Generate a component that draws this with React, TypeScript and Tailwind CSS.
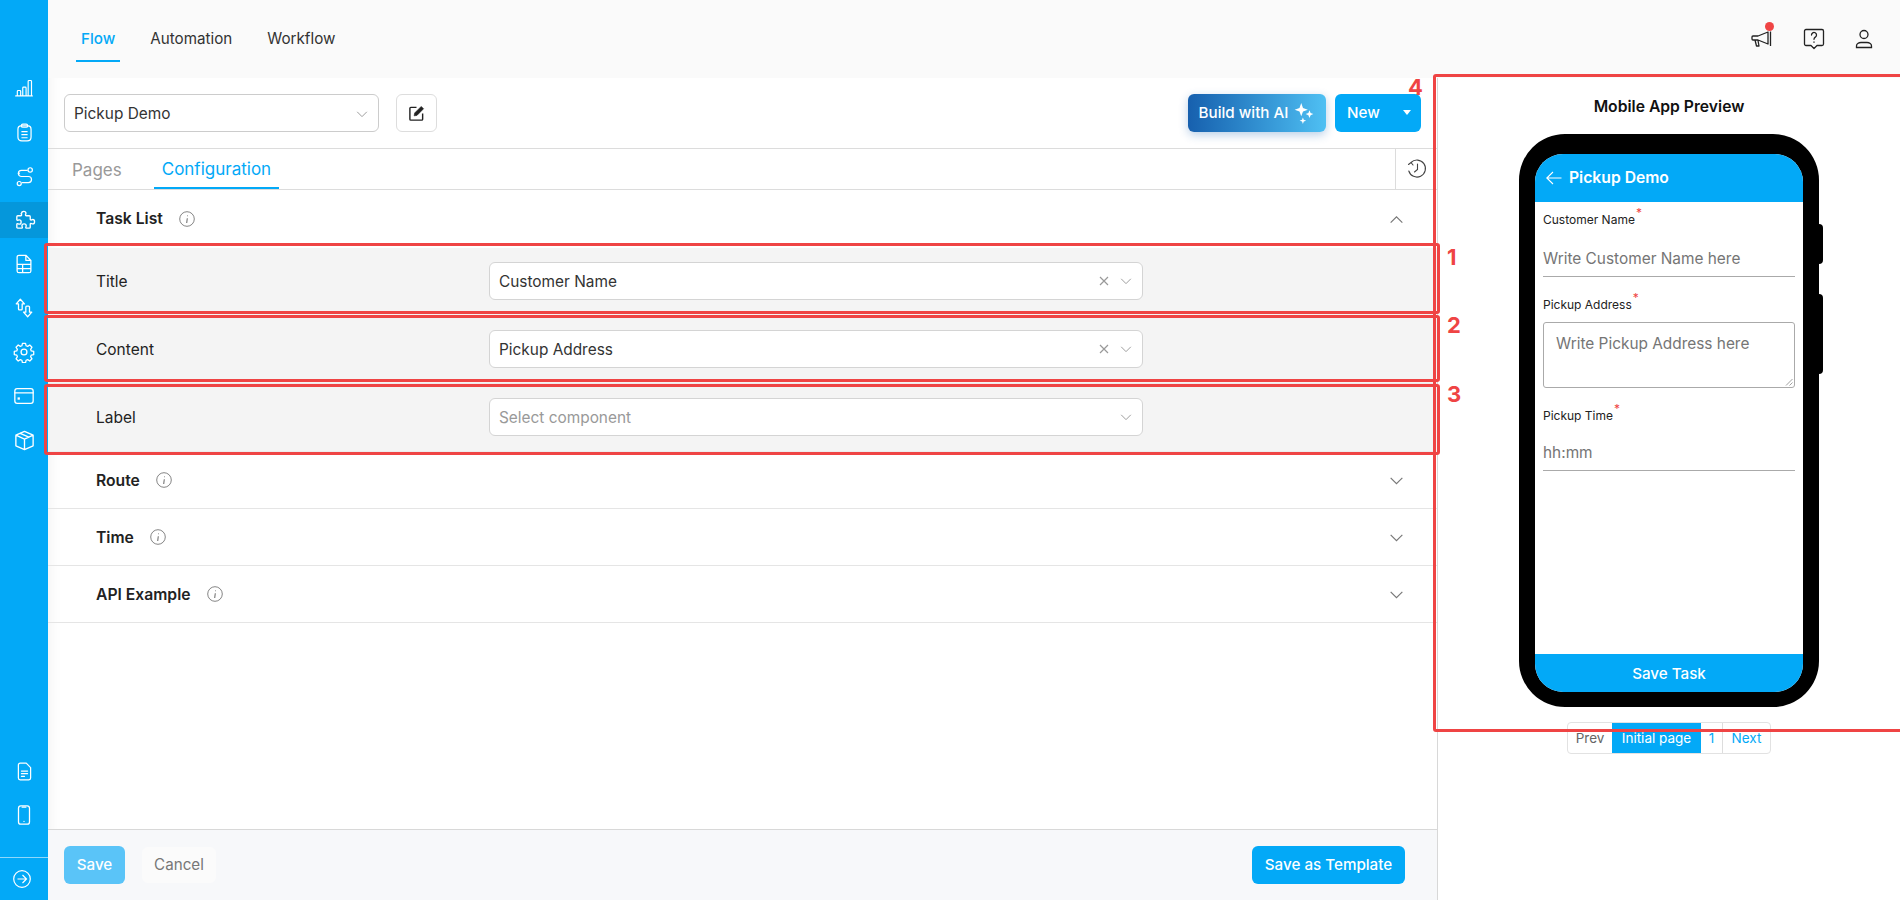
import type { ReactNode } from 'react';

const ICON = 'fill-none stroke-current';

function Svg({ size = 20, width = 1.4, children }: { size?: number; width?: number; children: ReactNode }) {
  return (
    <svg width={size} height={size} viewBox="0 0 24 24" className={ICON} strokeWidth={width} strokeLinecap="round" strokeLinejoin="round">
      {children}
    </svg>
  );
}

const sideTop: ReactNode[] = [
  <Svg key="bars" size={20}>
    <path d="M2 21.5h20M4 21v-5a1 1 0 0 1 1-1h2a1 1 0 0 1 1 1v5M10.5 21v-9a1 1 0 0 1 1-1h2a1 1 0 0 1 1 1v9M17 21V4a1 1 0 0 1 1-1h2a1 1 0 0 1 1 1v17" />
  </Svg>,
  <Svg key="clip" size={21}>
    <path d="M8 4.500h8c2.500 0 3.500 1.500 3.500 4v8.500c0 2.800-1.700 4.500-4.500 4.500H9c-2.800 0-4.500-1.700-4.500-4.500V8.500c0-2.500 1-4 3.500-4z" />
    <rect x="8.500" y="2.500" width="7" height="3.500" rx="1.500" />
    <path d="M9 11h6M9 14.500h6M9 18h6" />
  </Svg>,
  <Svg key="route" size={21}>
    <circle cx="6" cy="20" r="2.300" />
    <circle cx="18.500" cy="4.500" r="2.500" />
    <path d="M15 5H8.500a3.500 3.500 0 0 0 0 7h8a3.500 3.500 0 0 1 0 7H9.500" />
    <circle cx="5.500" cy="8.500" r="0.500" />
  </Svg>,
  <Svg key="puzzle" size={23}>
    <path d="M9 4.500c0-1.300 1-2 2.200-2s2.300.7 2.300 2c0 .8-.5 1.200-.5 1.800 0 .4.300.7.700.7H17a1 1 0 0 1 1 1v2.800c0 .4.300.7.700.7.600 0 1-.5 1.800-.5 1.300 0 2 1 2 2.200s-.7 2.300-2 2.300c-.8 0-1.200-.5-1.800-.5-.4 0-.7.300-.7.700V19a1 1 0 0 1-1 1h-3c-.4 0-.7-.3-.7-.7 0-.6.500-1 .5-1.800 0-1.200-1-2-2.200-2s-2.300.8-2.300 2c0 .8.500 1.200.5 1.800 0 .4-.3.700-.7.700H5a1 1 0 0 1-1-1v-3c0-.4.300-.7.700-.7.600 0 1 .5 1.800.5 1.200 0 2-1 2-2.300s-.8-2.200-2-2.200c-.8 0-1.200.5-1.800.5-.4 0-.7-.3-.7-.7V8a1 1 0 0 1 1-1h3.300c.4 0 .7-.3.700-.7 0-.6-.5-1-.5-1.800z" />
  </Svg>,
  <Svg key="sheet" size={22}>
    <path d="M14 2.500H6.500a2 2 0 0 0-2 2v15a2 2 0 0 0 2 2h11a2 2 0 0 0 2-2V8zM14 2.500V8h5.500M4.500 12.500h15M4.500 17h15M10.500 12.500v9" />
  </Svg>,
  <Svg key="updown" size={22}>
    <path d="M8 2.500 3.500 7.500H6v5.500a1 1 0 0 0 1 1h2a1 1 0 0 0 1-1V7.500h2.500zM16 21.500l4.500-5H18V11a1 1 0 0 0-1-1h-2a1 1 0 0 0-1 1v5.500h-2.500z" />
  </Svg>,
  <Svg key="gear" size={22}>
    <circle cx="12" cy="12" r="3.200" />
    <path d="M10.300 2.500h3.400l.6 2.700 1.700.7 2.300-1.500 2.400 2.400-1.500 2.300.7 1.700 2.700.6v3.400l-2.700.6-.7 1.700 1.500 2.300-2.400 2.400-2.300-1.500-1.700.7-.6 2.700h-3.400l-.6-2.700-1.700-.7-2.300 1.500-2.400-2.400 1.500-2.300-.7-1.700-2.700-.6v-3.400l2.700-.6.7-1.700-1.500-2.300 2.400-2.400 2.300 1.500 1.700-.7z" />
  </Svg>,
  <Svg key="card" size={22}>
    <rect x="2" y="4" width="20" height="16" rx="2.500" />
    <path d="M2 8.500h20" />
    <rect x="5" y="13.500" width="2.500" height="2.500" fill="currentColor" stroke="none" />
  </Svg>,
  <Svg key="box" size={23}>
    <path d="M12 2.500l9 4v11l-9 4-9-4v-11zM3 6.500l9 4 9-4M12 10.500v11M7.500 4.500l9 4" />
  </Svg>,
];

function Info() {
  return (
    <span className="text-[#777]">
      <svg width="16" height="16" viewBox="0 0 16 16" className={ICON} strokeWidth={0.9}>
        <circle cx="8" cy="8" r="7.300" />
        <path d="M8.300 7.200 7.700 12" strokeWidth={1.100} />
        <circle cx="8.500" cy="4.800" r="0.500" fill="currentColor" stroke="none" />
      </svg>
    </span>
  );
}

function Chevron({ up = false, size = 16, className = 'text-[#777]' }: { up?: boolean; size?: number; className?: string }) {
  return (
    <span className={className}>
      <svg width={size} height={size} viewBox="0 0 16 16" className={ICON} strokeWidth={1.100}>
        <path d={up ? 'M2.500 11 8 5.500 13.500 11' : 'M2.500 5.500 8 11l5.500-5.500'} />
      </svg>
    </span>
  );
}

function Field({ label, value }: { label: string; value?: string }) {
  return (
    <div className="flex h-[68px] items-center border-b border-[#ececec] bg-[#f4f4f4] pl-[48px]">
      <div className="w-[393px] text-[15.500px] text-[#222]">{label}</div>
      <div className="mb-[2px] flex h-[38px] w-[654px] items-center rounded-md border border-[#d4d4d4] bg-white pl-[9px] pr-[9px]">
        <span className={`flex-1 pt-[2px] text-[15.400px] ${value ? 'text-[#333]' : 'text-[#999]'}`}>
          {value ?? 'Select component'}
        </span>
        {value && (
          <svg width="12" height="12" viewBox="0 0 12 12" className="mr-[9px] fill-none stroke-[#999]" strokeWidth={1.200}>
            <path d="M2 2l8 8M10 2l-8 8" />
          </svg>
        )}
        <Chevron size={14} className="text-[#999]" />
      </div>
    </div>
  );
}

function Section({ title, open = false, gap = 'ml-[16px]' }: { title: string; open?: boolean; gap?: string }) {
  return (
    <div className={`flex items-center justify-between pl-[48px] pr-[32px] ${open ? 'h-[58px]' : 'h-[57px] border-b border-[#e5e5e5]'}`}>
      <div className="flex items-center">
        <span className={`text-[15.700px] font-semibold text-[#222] ${open ? '' : 'pt-[2px]'}`}>{title}</span>
        <span className={gap}>
          <Info />
        </span>
      </div>
      <Chevron up={open} size={17} />
    </div>
  );
}

function Label({ text, className = '' }: { text: string; className?: string }) {
  return (
    <div className={`relative h-[22px] text-[12px] leading-[22px] text-[#222] ${className}`}>
      {text}
      <span className="relative top-[-7px] ml-[1px] text-[12px] text-[#ef4444]">*</span>
    </div>
  );
}

function Phone() {
  return (
    <div className="relative h-[573px] w-[300px]">
      <div className="absolute right-[-4px] top-[90px] h-[40px] w-[8px] rounded-sm bg-black" />
      <div className="absolute right-[-4px] top-[160px] h-[80px] w-[8px] rounded-sm bg-black" />
      <div className="relative flex h-full flex-col rounded-[46px] border-x-[16px] border-b-[15px] border-t-[20px] border-black bg-black">
        <div className="flex h-full flex-col overflow-hidden rounded-[28px] bg-white">
          <div className="flex h-[48px] items-center bg-[#03a9f7] pl-[11px] text-white">
            <svg width="16" height="14" viewBox="0 0 16 14" className="fill-none stroke-current" strokeWidth={1.100}>
              <path d="M15.500 7H.8M7 1 .8 7 7 13" />
            </svg>
            <span className="ml-[7px] text-[15.700px] font-semibold">Pickup Demo</span>
          </div>
          <div className="flex flex-1 flex-col px-[8px] pt-[7px]">
            <Label text="Customer Name" />
            <div className="mt-[9px] flex h-[37px] items-center border-b border-[#aaa] pt-[2px] text-[15.400px] text-[#757575]">Write Customer Name here</div>
            <Label text="Pickup Address" className="mt-[17px]" />
            <div className="relative mt-[6px] h-[66px] rounded-[3px] border border-[#aaa] pl-[12px] pt-[9px] text-[15.400px] text-[#757575]">
              Write Pickup Address here
              <svg width="8" height="8" viewBox="0 0 8 8" className="absolute bottom-[1px] right-[1px] stroke-[#777]" strokeWidth={0.7}>
                <path d="M1 7.500 7.500 1M4.500 7.500 7.500 4.500" />
              </svg>
            </div>
            <Label text="Pickup Time" className="mt-[17px]" />
            <div className="mt-[7px] flex h-[37px] items-center border-b border-[#aaa] pt-[2px] text-[15.400px] text-[#757575]">hh:mm</div>
          </div>
          <div className="flex h-[38px] items-center justify-center bg-[#03a9f7] pt-[2px] text-[15.200px] font-medium text-white">Save Task</div>
        </div>
      </div>
    </div>
  );
}

function Callout({ n, className }: { n: string; className: string }) {
  return <div className={`absolute text-[22px] font-bold leading-none text-[#ef4444] ${className}`}>{n}</div>;
}

export default function App() {
  return (
    <div className="relative flex h-[900px] w-full overflow-hidden bg-white font-['Inter',sans-serif] text-[#222]">
      {/* sidebar */}
      <aside className="flex w-[48px] shrink-0 flex-col bg-[#03a9f7] text-white">
        <div className="mt-[70px] flex flex-col gap-2">
          {sideTop.map((icon, i) => (
            <div key={i} className={`flex h-9 items-center justify-center ${i === 3 ? 'bg-[#0597db]' : ''}`}>
              {icon}
            </div>
          ))}
        </div>
        <div className="mt-auto flex flex-col gap-2 pb-[24px]">
          <div className="flex h-9 items-center justify-center">
            <Svg size={21}>
              <path d="M14 2.500H7a2 2 0 0 0-2 2v15a2 2 0 0 0 2 2h10a2 2 0 0 0 2-2V7.500zM8.500 11.500h7M8.500 14.500h7M8.500 17.500h3.500" />
            </Svg>
          </div>
          <div className="flex h-9 items-center justify-center">
            <Svg size={22}>
              <rect x="6" y="2" width="12" height="20" rx="2.500" />
              <path d="M10 3.500h4M12 19h.01" />
            </Svg>
          </div>
        </div>
        <div className="flex h-[43px] items-center border-t border-[#8fd8fb] pl-[13px]">
          <svg width="18" height="18" viewBox="0 0 18 18" className="fill-none stroke-white" strokeWidth={1.200}>
            <circle cx="9" cy="9" r="8.300" />
            <path d="M4.500 9h9M9.500 5l4 4-4 4" />
          </svg>
        </div>
      </aside>

      <div className="flex min-w-0 flex-1 flex-col">
        {/* top nav */}
        <header className="flex h-[78px] shrink-0 items-center bg-[#fafafa] pl-[28px] pr-[26px]">
          <nav className="flex h-full gap-[25px] text-[15.200px]">
            <div className="flex h-[62px] items-end border-b-2 border-[#03a9f7] px-[5px] pb-[9px] font-medium text-[#03a9f7]">Flow</div>
            <div className="flex h-[62px] items-end px-[5px] pb-[11px] text-[#333]">Automation</div>
            <div className="flex h-[62px] items-end px-[5px] pb-[11px] text-[#333]">Workflow</div>
          </nav>
          <div className="ml-auto flex items-center gap-[29px] text-[#222]">
            <div className="relative">
              <svg width="24" height="22" viewBox="0 0 24 22" className="fill-none stroke-current" strokeWidth={1.300} strokeLinejoin="round">
                <path d="M3 8h5l10-4v12L8 12H3a1 1 0 0 1-1-1V9a1 1 0 0 1 1-1zM5 12l1.500 6h2.500l-1-5.500M20.500 3.500V18" />
              </svg>
              <span className="absolute right-[0px] top-[-6px] size-[9px] rounded-full bg-[#ef4444]" />
            </div>
            <svg width="22" height="24" viewBox="0 0 22 24" className="fill-none stroke-current" strokeWidth={1.300} strokeLinejoin="round">
              <path d="M3 2.500h16a1.500 1.500 0 0 1 1.500 1.500v13a1.500 1.500 0 0 1-1.500 1.500h-5l-3 3-3-3H3A1.500 1.500 0 0 1 1.500 17V4A1.500 1.500 0 0 1 3 2.500z" />
              <path d="M8.500 8a2.500 2.500 0 1 1 3.800 2.100c-.9.600-1.300 1.100-1.300 2.200M11 15v.3" strokeLinecap="round" />
            </svg>
            <svg width="20" height="22" viewBox="0 0 20 22" className="fill-none stroke-current" strokeWidth={1.300}>
              <circle cx="10" cy="6.500" r="4" />
              <path d="M2.500 19.500V18c0-2 2-3.500 4.500-3.500h6c2.500 0 4.500 1.500 4.500 3.500v1.500z" />
            </svg>
          </div>
        </header>

        <div className="flex min-h-0 flex-1">
          {/* editor */}
          <main className="flex w-[1390px] shrink-0 flex-col border-r border-[#d8d8d8] shadow-[inset_14px_0_14px_-12px_rgba(0,0,0,0.05)]">
            <div className="flex h-[71px] shrink-0 items-center border-b border-[#dcdcdc] pl-[16px] pr-[16px]">
              <div className="flex h-[38px] w-[315px] items-center justify-between rounded-md border border-[#ccc] bg-white pl-[9px] pr-[9px] pt-px text-[15.400px] text-[#333]">
                Pickup Demo
                <Chevron size={14} className="text-[#999]" />
              </div>
              <div className="ml-[17px] flex h-[38px] w-[41px] items-center justify-center rounded-md border border-[#ddd] text-[#222]">
                <svg width="17" height="17" viewBox="0 0 18 18" className="fill-none stroke-current" strokeWidth={1.500}>
                  <path d="M9 2.500H3a1 1 0 0 0-1 1V15a1 1 0 0 0 1 1h11.500a1 1 0 0 0 1-1V9" />
                  <path d="M7 8.500 14 1.500l2.500 2.500-7 7-3 .5z" fill="currentColor" strokeWidth={0.6} />
                </svg>
              </div>
              <div className="ml-auto flex h-[38px] w-[138px] items-center justify-center gap-[5px] rounded-md bg-gradient-to-r from-[#1760ae] to-[#4fc0f3] text-[15.200px] font-medium text-white shadow-[0_3px_10px_rgba(23,96,174,0.3)]">
                Build with AI
                <svg width="22" height="22" viewBox="0 0 20 20" className="fill-white">
                  <path d="M7.500 1l1.600 4.400L13.500 7 9.100 8.600 7.500 13 5.900 8.600 1.500 7l4.400-1.600zM15 7.500l1 2.500 2.500 1-2.500 1-1 2.500-1-2.500-2.500-1 2.500-1zM9 14l.8 2.200 2.200.8-2.200.8L9 20l-.8-2.200L6 17l2.200-.8z" />
                </svg>
              </div>
              <div className="ml-[9px] flex h-[38px] w-[86px] items-center justify-between rounded-md bg-[#03a9f7] pl-[12px] pr-[10.500px] text-[15.200px] font-medium text-white">
                New
                <span className="mb-[2px] h-0 w-0 border-x-[4.500px] border-t-[5px] border-x-transparent border-t-white" />
              </div>
            </div>

            <div className="flex h-[41px] shrink-0 items-stretch border-b border-[#dcdcdc] pl-[8px]">
              <div className="flex items-center px-[16px] pt-[3px] text-[17px] text-[#999]">Pages</div>
              <div className="ml-[16px] flex items-center border-b-2 border-[#03a9f7] px-[8px] pt-[3px] text-[17px] text-[#03a9f7]">Configuration</div>
              <div className="ml-auto flex w-[42px] items-center justify-center border-l border-[#dcdcdc] text-[#444]">
                <svg width="20" height="20" viewBox="0 0 20 20" className="fill-none stroke-current" strokeWidth={1.100} strokeLinecap="round">
                  <path d="M4 3.500A8.500 8.500 0 1 1 1.800 12M1.500 5.500 4 3.500l2 2.500M10.500 5v5.500l-3 2.500" />
                </svg>
              </div>
            </div>

            <Section title="Task List" open />
            <Field label="Title" value="Customer Name" />
            <Field label="Content" value="Pickup Address" />
            <Field label="Label" />
            <Section title="Route" />
            <Section title="Time" />
            <Section title="API Example" />

            <div className="mt-auto flex h-[71px] shrink-0 items-center border-t border-[#d8d8d8] bg-[#f7f8fa] pl-[16px] pr-[32px]">
              <div className="flex h-[38px] w-[61px] items-center justify-center rounded-md bg-[#5ac4f8] text-[15.200px] font-medium text-white">Save</div>
              <div className="ml-[17px] flex h-[36px] w-[74px] items-center justify-center rounded-md bg-[#fbfbfb] text-[15.200px] text-[#777]">Cancel</div>
              <div className="ml-auto flex h-[38px] w-[153px] items-center justify-center rounded-md bg-[#03a9f7] text-[15.200px] font-medium text-white">Save as Template</div>
            </div>
          </main>

          {/* preview */}
          <section className="flex min-w-0 flex-1 flex-col items-center pt-[19px]">
            <h2 className="text-[15.700px] font-semibold leading-[20px] text-[#111]">Mobile App Preview</h2>
            <div className="mt-[17px]">
              <Phone />
            </div>
            <div className="mt-[15px] flex h-[32px] w-[204px] items-stretch overflow-hidden rounded-[4px] border border-[#e2e2e2] text-[13.500px]">
              <div className="flex w-[44px] items-center justify-center text-[#666]">Prev</div>
              <div className="flex w-[89px] items-center justify-center bg-[#03a9f7] text-white">Initial page</div>
              <div className="flex w-[22px] items-center justify-center border-r border-[#ddd] text-[#03a9f7]">1</div>
              <div className="flex flex-1 items-center justify-center text-[#03a9f7]">Next</div>
            </div>
          </section>
        </div>
      </div>

      {/* annotation boxes drawn on top of the screenshot */}
      <div className="pointer-events-none absolute left-[44px] top-[243px] h-[71px] w-[1396px] rounded-[3px] border-[3px] border-[#ef4444]" />
      <div className="pointer-events-none absolute left-[44px] top-[315px] h-[67px] w-[1396px] rounded-[3px] border-[3px] border-[#ef4444]" />
      <div className="pointer-events-none absolute left-[44px] top-[384px] h-[71px] w-[1396px] rounded-[3px] border-[3px] border-[#ef4444]" />
      <div className="pointer-events-none absolute left-[1433px] top-[74px] h-[658px] w-[480px] rounded-[3px] border-[3px] border-[#ef4444]" />
      <Callout n="1" className="left-[1447px] top-[246px]" />
      <Callout n="2" className="left-[1447px] top-[314px]" />
      <Callout n="3" className="left-[1447px] top-[383px]" />
      <Callout n="4" className="left-[1408px] top-[76px]" />
    </div>
  );
}
